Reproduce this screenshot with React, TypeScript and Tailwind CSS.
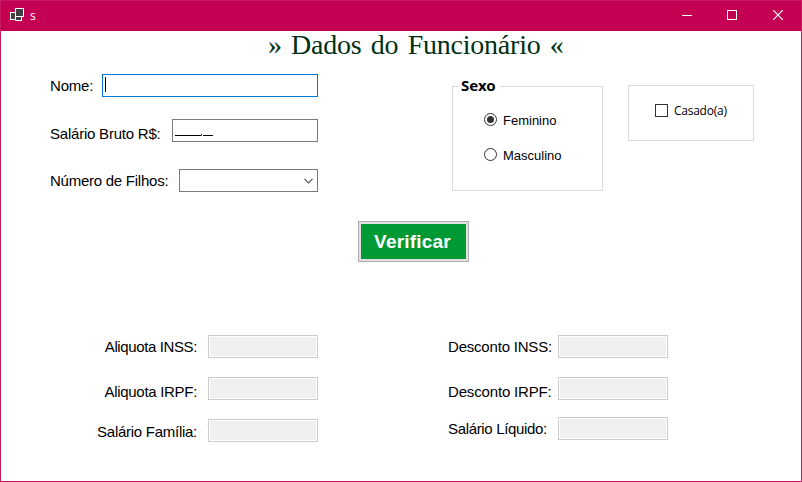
import type { ReactNode } from "react";

const sans = "font-['Liberation_Sans',Arial,sans-serif]";

function Label({ children, className = "" }: { children: ReactNode; className?: string }) {
  return (
    <span className={`whitespace-nowrap text-[15px] leading-[23px] text-black ${className}`}>{children}</span>
  );
}

function Readout() {
  return <div className="h-[23px] w-[110px] shrink-0 border border-[#cccccc] bg-white p-px"><div className="h-full bg-[#f0f0f0]" /></div>;
}

function TitleBar() {
  return (
    <header className="flex h-[30px] shrink-0 items-start bg-[#c30052]">
      <svg className="ml-[9px] mt-[7px]" width="14" height="13" shapeRendering="crispEdges" fill="#404040" stroke="#fff">
        <rect x="5.5" y="8.5" width="6" height="4" />
        <rect x="0.5" y="4.5" width="5" height="7" />
        <rect x="5.5" y="0.5" width="8" height="8" />
      </svg>
      <span className="ml-[6px] mt-[7px] font-['Open_Sans','Noto_Sans',sans-serif] text-[12px] leading-4 text-white">s</span>
      <div className="ml-auto mr-[18px] mt-[9px] flex">
        <svg className="mr-[35px]" width="10" height="10" stroke="#fff" shapeRendering="crispEdges"><path d="M0 5.5h10" /></svg>
        <svg className="mr-[36px]" width="10" height="10" fill="none" stroke="#fff" shapeRendering="crispEdges"><rect x=".5" y=".5" width="9" height="9" /></svg>
        <svg width="10" height="10" stroke="#fff" strokeWidth="1.2"><path d="M0 0l10 10M10 0L0 10" /></svg>
      </div>
    </header>
  );
}

function EntryFields() {
  return (
    <div className="ml-[49px] mt-[13px] flex w-[268px] flex-col">
      <div className="flex h-[45px] items-start justify-between">
        <Label className="tracking-[-0.2px]">Nome:</Label>
        <div className="h-[23px] w-[216px] border border-[#0078d7] pl-[2px] pt-[2px]">
          <div className="h-[15px] w-px bg-black" />
        </div>
      </div>
      <div className="flex h-[50px] items-start justify-between">
        <Label className="mt-[3px] tracking-[-0.22px]">Salário Bruto R$:</Label>
        <div className="flex h-[23px] w-[146px] items-start border border-[#7a7a7a] pl-[2px] pt-[13px]">
          <svg width="39" height="5" stroke="#000"><path d="M0 2.5h26M28 2.5h10" shapeRendering="crispEdges" /><path d="M26.8 1l-1 2" /></svg>
        </div>
      </div>
      <div className="flex h-[23px] items-start justify-between">
        <Label className="tracking-[-0.25px]">Número de Filhos:</Label>
        <div className="flex h-[23px] w-[139px] items-center justify-end border border-[#7a7a7a] pr-[4px]">
          <svg width="9" height="6" fill="none" stroke="#555" strokeWidth="1.2"><path d="M.5 .8l4 4 4-4" /></svg>
        </div>
      </div>
    </div>
  );
}

function Radio({ label, checked = false }: { label: string; checked?: boolean }) {
  return (
    <div className="flex h-[35px] items-start gap-[6px]">
      <svg width="13" height="13" fill="none" stroke="#333">
        <circle cx="6.5" cy="6.5" r="6" />
        {checked && <circle cx="6.5" cy="6.5" r="3.5" fill="#333" stroke="none" />}
      </svg>
      <span className="whitespace-nowrap text-[13px] leading-[15px]">{label}</span>
    </div>
  );
}

function GenderGroup() {
  return (
    <div className="ml-[134px] mt-[17px] flex h-[113px] w-[151px] flex-col">
      <div className="flex h-[16px] items-start">
        <div className="mt-[8px] h-[8px] w-[7px] border-l border-t border-[#dcdcdc]" />
        <span className="w-[41px] whitespace-nowrap pl-[2px] font-['Noto_Sans','Open_Sans',sans-serif] text-[15px] font-bold leading-[14px]">Sexo</span>
        <div className="mt-[8px] h-[8px] flex-1 border-r border-t border-[#dcdcdc]" />
      </div>
      <div className="flex-1 border-x border-b border-[#dcdcdc] pl-[31px] pt-[19px]">
        <Radio label="Feminino" checked />
        <Radio label="Masculino" />
      </div>
    </div>
  );
}

export default function App() {
  return (
    <div className={`flex h-[482px] w-[802px] flex-col overflow-hidden border border-[#c91a62] bg-white text-black ${sans}`}>
      <TitleBar />
      <h1 className="ml-[267px] h-[30px] whitespace-nowrap font-['Liberation_Serif','Times_New_Roman',serif] text-[28px] leading-[28px] tracking-[-0.22px] text-[#003014] [word-spacing:2.5px]">
        » Dados do Funcionário «
      </h1>
      <main>
        <section className="flex h-[160px] items-start">
          <EntryFields />
          <GenderGroup />
          <div className="ml-[25px] mt-[24px] flex h-[56px] w-[126px] items-start border border-[#dcdcdc] pl-[26px] pt-[18px]">
            <div className="size-[13px] border border-[#333]" />
            <span className="ml-[6px] whitespace-nowrap font-['Open_Sans','Noto_Sans',sans-serif] text-[12px] leading-[14px] tracking-[-0.25px]">Casado(a)</span>
          </div>
        </section>
        <button className="ml-[357px] block h-[41px] w-[111px] border border-[#adadad] bg-[#e1e1e1] p-[2px]">
          <span className="flex h-full items-center justify-center bg-[#009933] pr-[2px] text-[19px] font-bold leading-none tracking-[0.2px] text-white">Verificar</span>
        </button>
        <section className="mt-[73px] flex items-start">
          <div className="ml-[90px] flex w-[227px] flex-col">
            <div className="flex h-[42px] items-start justify-end gap-[11px]"><Label className="tracking-[-0.38px]">Aliquota INSS:</Label><Readout /></div>
            <div className="flex h-[42px] items-start justify-end gap-[11px]"><Label className="mt-[3px] tracking-[-0.3px]">Aliquota IRPF:</Label><Readout /></div>
            <div className="flex h-[24px] items-start justify-end gap-[11px]"><Label className="mt-px tracking-[-0.27px]">Salário Família:</Label><Readout /></div>
          </div>
          <div className="ml-[130px] flex w-[220px] flex-col">
            <div className="flex h-[42px] items-start justify-between"><Label className="tracking-[-0.2px]">Desconto INSS:</Label><Readout /></div>
            <div className="flex h-[40px] items-start justify-between"><Label className="mt-[3px] tracking-[-0.16px]">Desconto IRPF:</Label><Readout /></div>
            <div className="flex h-[23px] items-start justify-between"><Label className="tracking-[-0.34px]">Salário Líquido:</Label><Readout /></div>
          </div>
        </section>
      </main>
    </div>
  );
}
